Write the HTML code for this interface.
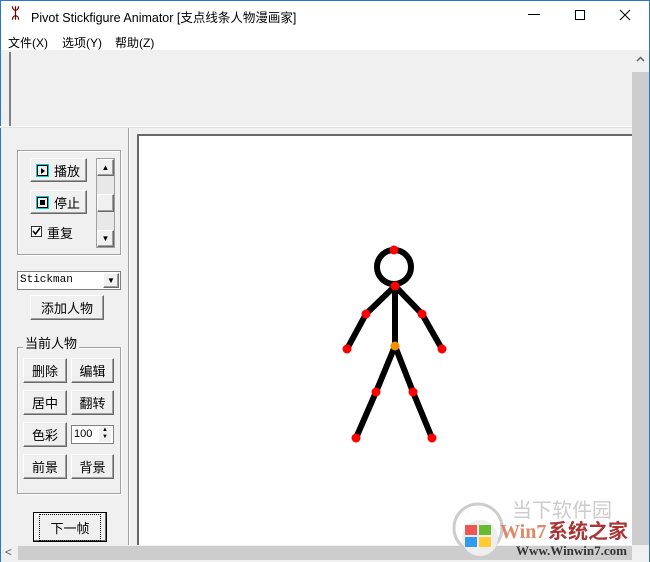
<!DOCTYPE html><html><head><meta charset="utf-8"><style>
*{margin:0;padding:0;box-sizing:border-box}
body{width:650px;height:562px;overflow:hidden;background:#f0f0f0;font-family:"Liberation Sans","Noto Sans CJK SC",sans-serif;font-size:12px;color:#000;position:relative}
.a{position:absolute}
.btn{position:absolute;background:#f0f0f0;border:1px solid;border-color:#fff #696969 #696969 #fff;box-shadow:inset -1px -1px 0 #a0a0a0;display:flex;align-items:center;justify-content:center;font-size:13px}
.grp{position:absolute;border:1px solid #a0a0a0;box-shadow:1px 1px 0 #fff inset,1px 1px 0 #fff}
</style></head><body>
<div class="a" style="left:0;top:0;width:650px;height:50px;background:#fff"></div>
<div class="a" style="left:0;top:0;width:650px;height:1px;background:#2b79c5"></div>
<div class="a" style="left:0;top:0;width:1px;height:562px;background:#2b79c5"></div>
<div class="a" style="left:649px;top:0;width:1px;height:562px;background:#2b79c5"></div>
<div class="a" style="left:11px;top:5px;font-size:15px;font-weight:bold;color:#600">ᛯ</div>
<div class="a" style="left:31px;top:7px;font-size:12.5px">Pivot Stickfigure Animator [支点线条人物漫画家]</div>
<div class="a" style="left:528px;top:14px;width:12px;height:1px;background:#000"></div>
<div class="a" style="left:575px;top:10px;width:10px;height:10px;border:1px solid #000"></div>
<svg class="a" style="left:619px;top:9px" width="12" height="12"><path d="M1 1L11 11M11 1L1 11" stroke="#000" stroke-width="1"/></svg>
<div class="a" style="left:8px;top:34px;font-size:12px">文件(X)</div>
<div class="a" style="left:62px;top:34px;font-size:12px">选项(Y)</div>
<div class="a" style="left:115px;top:34px;font-size:12px">帮助(Z)</div>
<div class="a" style="left:9px;top:52px;width:2px;height:74px;background:#808080"></div>
<div class="a" style="left:0;top:126px;width:632px;height:1px;background:#fff"></div>
<div class="a" style="left:0;top:127px;width:632px;height:1px;background:#e0e0e0"></div>
<div class="a" style="left:128px;top:128px;width:1px;height:417px;background:#a0a0a0"></div>
<div class="a" style="left:129px;top:128px;width:1px;height:417px;background:#fff"></div>
<div class="a" style="left:137px;top:134px;width:495px;height:411px;background:#fff;border-top:2px solid #696969;border-left:2px solid #696969"></div>
<div class="a" style="left:632px;top:50px;width:17px;height:495px;background:#cdcdcd"></div>
<div class="a" style="left:632px;top:50px;width:17px;height:22px;background:#f0f0f0"></div>
<svg class="a" style="left:636px;top:56px" width="9" height="6"><path d="M1 5L4.5 1.5L8 5" stroke="#606060" stroke-width="1.5" fill="none"/></svg>
<div class="a" style="left:1px;top:545px;width:648px;height:17px;background:#f0f0f0"></div>
<div class="a" style="left:18px;top:546px;width:614px;height:14px;background:#cdcdcd"></div>
<div class="a" style="left:5px;top:545px;font-size:12px;color:#606060">&lt;</div>
<div class="grp" style="left:17px;top:150px;width:104px;height:105px"></div>
<div class="btn" style="left:30px;top:158px;width:57px;height:24px"><span style="display:inline-block;width:11px;height:11px;border:1px solid #000;margin-right:6px;position:relative;outline:1px solid #0cc"><span style="position:absolute;left:3px;top:2px;border-left:4px solid #000;border-top:3px solid transparent;border-bottom:3px solid transparent"></span></span>播放</div>
<div class="btn" style="left:30px;top:190px;width:57px;height:24px"><span style="display:inline-block;width:11px;height:11px;border:1px solid #000;margin-right:6px;position:relative;outline:1px solid #0cc"><span style="position:absolute;left:2px;top:2px;width:5px;height:5px;background:#000"></span></span>停止</div>
<div class="a" style="left:31px;top:226px;width:11px;height:11px;border:1px solid #333;background:#fff"></div>
<svg class="a" style="left:32px;top:227px" width="9" height="9"><path d="M1 4L3.5 7L8 1" stroke="#000" stroke-width="1.6" fill="none"/></svg>
<div class="a" style="left:47px;top:223px;font-size:13px">重复</div>
<div class="a" style="left:96px;top:158px;width:19px;height:90px;background:#e8e8e8;border:1px solid #a0a0a0"></div>
<div class="btn" style="left:97px;top:159px;width:17px;height:17px;font-size:8px">▲</div>
<div class="btn" style="left:97px;top:194px;width:17px;height:18px"></div>
<div class="btn" style="left:97px;top:230px;width:17px;height:17px;font-size:8px">▼</div>
<div class="a" style="left:17px;top:271px;width:104px;height:19px;background:#fff;border:1px solid #808080;font-family:'Liberation Mono',monospace;font-size:11px;line-height:17px;padding-left:2px">Stickman</div>
<div class="btn" style="left:103px;top:273px;width:16px;height:15px;font-size:8px">▼</div>
<div class="btn" style="left:30px;top:295px;width:74px;height:25px">添加人物</div>
<div class="grp" style="left:17px;top:347px;width:104px;height:147px"></div>
<div class="a" style="left:23px;top:333px;background:#f0f0f0;padding:0 2px;font-size:13px">当前人物</div>
<div class="btn" style="left:23px;top:358px;width:44px;height:25px">删除</div>
<div class="btn" style="left:71px;top:358px;width:43px;height:25px">编辑</div>
<div class="btn" style="left:23px;top:390px;width:44px;height:25px">居中</div>
<div class="btn" style="left:71px;top:390px;width:43px;height:25px">翻转</div>
<div class="btn" style="left:23px;top:422px;width:44px;height:25px">色彩</div>
<div class="a" style="left:71px;top:425px;width:43px;height:19px;background:#fff;border:1px solid #808080;font-size:11px;line-height:17px;padding-left:2px">100</div>
<div class="a" style="left:99px;top:427px;width:12px;height:15px;background:#f0f0f0;font-size:6px;line-height:7px;text-align:center">▲<br>▼</div>
<div class="btn" style="left:23px;top:454px;width:44px;height:25px">前景</div>
<div class="btn" style="left:71px;top:454px;width:43px;height:25px">背景</div>
<div class="btn" style="left:33px;top:512px;width:74px;height:30px;border-color:#000;box-shadow:inset -1px -1px 0 #696969,inset 1px 1px 0 #fff"><span style="border:1px dotted #000;padding:3px 10px">下一帧</span></div>
<svg class="a" style="left:0;top:0" width="650" height="562">
<g stroke="#000" stroke-width="6" stroke-linecap="round" fill="none">
<circle cx="394" cy="267" r="17"/>
<path d="M395 286L395 346M395 286L366 314L347 349M395 286L422 314L442 349M395 346L376 392L356 438M395 346L413 392L432 438"/>
</g>
<g fill="#f00">
<circle cx="394" cy="250" r="4.5"/><circle cx="395" cy="286" r="4.5"/><circle cx="366" cy="314" r="4.5"/><circle cx="422" cy="314" r="4.5"/><circle cx="347" cy="349" r="4.5"/><circle cx="442" cy="349" r="4.5"/><circle cx="376" cy="392" r="4.5"/><circle cx="413" cy="392" r="4.5"/><circle cx="356" cy="438" r="4.5"/><circle cx="432" cy="438" r="4.5"/>
</g>
<circle cx="395" cy="346" r="4.5" fill="#f39000"/>
<circle cx="478" cy="528" r="24" fill="none" stroke="#ccc" stroke-width="3"/>
<circle cx="480" cy="538" r="18" fill="#eee"/>
<rect x="465" y="525" width="12" height="10" fill="#e55"/><rect x="479" y="525" width="12" height="10" fill="#6b3"/><rect x="465" y="537" width="12" height="10" fill="#39e"/><rect x="479" y="537" width="12" height="10" fill="#fc3"/>
<text x="512" y="517" font-size="20" fill="#ccc" font-family="Noto Sans CJK SC">当下软件园</text>
<text x="500" y="538" font-size="20" font-weight="bold" fill="#d86" font-family="Liberation Serif">Win7</text>
<text x="548" y="538" font-size="20" font-weight="bold" fill="#a33" font-family="Noto Sans CJK SC">系统之家</text>
<text x="516" y="555" font-size="13" font-weight="bold" fill="#333" font-family="Liberation Serif">Www.Winwin7.com</text>
</svg>
</body></html>
